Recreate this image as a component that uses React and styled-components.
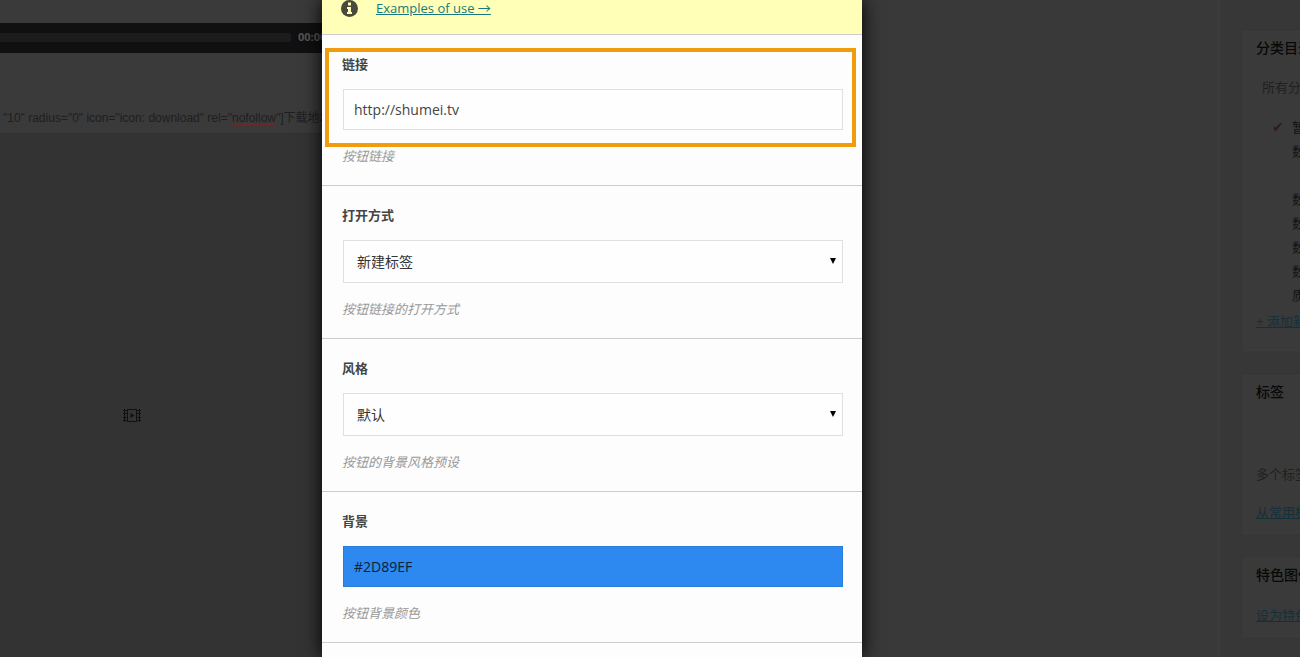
import React from 'react'
import styled, { createGlobalStyle } from 'styled-components'

const GlobalStyle = createGlobalStyle`
  * {
    box-sizing: border-box;
  }

  body {
    margin: 0;
    background: #373737;
    font-family: 'Open Sans', 'Noto Sans CJK SC', sans-serif;
    font-size: 13px;
    line-height: 18px;
    color: #333;
  }
`;

const Page = styled.div`
  position: relative;
  display: flex;
  height: 100vh;
  overflow: hidden;
`;

const Editor = styled.main`
  flex: 1;
  min-width: 0;
  display: flex;
  background: #393939;
  border-right: 3px solid #3b3b3b;
`;

const Preview = styled.div`
  width: 45%;
  background: #333;
`;

const Content = styled.div`
  background: #3a3a3a;
  border-bottom: 1px solid #303030;
  padding-top: 23px;
`;

const Player = styled.div`
  display: flex;
  align-items: center;
  gap: 7px;
  height: 30px;
  padding-bottom: 2px;
  background: #101010;
  color: #555;
  font: bold 11px/18px 'Open Sans', sans-serif;

  .track {
    width: 291px;
    height: 9px;
    border-radius: 0 2px 2px 0;
    background: #1c1c1c;
  }
`;

const Shortcode = styled.p`
  margin: 0;
  padding: 56px 0 6px 3px;
  color: #1e1e1e;
  font: 12px/18px 'Liberation Sans', 'Noto Sans CJK SC', sans-serif;
  white-space: nowrap;
  overflow: hidden;

  u {
    text-decoration-color: #6b2929;
    text-underline-offset: 2px;
  }
`;

const Film = styled.svg`
  display: block;
  margin: 275px 0 0 123px;
`;

const Sidebar = styled.aside`
  width: 80px;
  display: flex;
  flex-direction: column;
  gap: 24px;
  padding: 31px 0 0 23px;
  white-space: nowrap;
  overflow: hidden;
`;

const Box = styled.section`
  background: #3a3a3a;
  border: 1px solid #3c3c3c;
  border-right: 0;
  padding: 7px 0 12px 12px;
  color: #202020;

  h2 {
    margin: 0;
    font-size: 14px;
    line-height: 18px;
    font-weight: 500;
    color: #080808;
  }

  a {
    color: #14303a;
  }
`;

const BoxText = styled.p`
  margin: ${({ $top }) => $top || 0}px 0 ${({ $bottom }) => $bottom || 0}px;
`;

const Categories = styled.div`
  margin-top: 21px;
  padding-left: 6px;

  ul {
    list-style: none;
    height: 212px;
    margin: 0 0 4px;
    padding: 19px 0 0 10px;
    overflow: hidden;
    color: #121212;
  }

  li {
    height: 24px;
    line-height: 24px;
  }

  label {
    display: flex;
    align-items: center;
    gap: 6px;
  }

  input {
    appearance: none;
    flex: none;
    width: 14px;
    height: 14px;
    margin: 0;
  }

  input:checked::before {
    content: '✔';
    display: block;
    color: #301a1a;
    font: 14px/14px 'DejaVu Sans', sans-serif;
  }
`;

const Overlay = styled.div`
  position: absolute;
  inset: 0;
  display: flex;
  justify-content: center;
  padding-right: 116px;
`;

const Modal = styled.form`
  width: 540px;
  height: 100%;
  background: #fdfdfd;
  box-shadow: 0 0 18px #000;
  overflow: hidden;
`;

const Notice = styled.div`
  display: flex;
  align-items: center;
  gap: 18px;
  height: 35px;
  padding: 0 19px 18px;
  background: #ffffb8;
  border-bottom: 1px solid #ccc;

  a {
    color: #187a78;
  }
`;

const FieldRow = styled.div`
  position: relative;
  padding: 20px 19px 20px 20px;
  border-bottom: 1px solid #ccc;

  label {
    display: block;
    font-weight: bold;
    color: #444;
  }

  small {
    display: block;
    font-size: 13px;
    font-style: italic;
    color: #999;
  }
`;

const Highlight = styled.span`
  position: absolute;
  inset: 13px 6px 38px 3px;
  border: 4px solid #f09c0c;
  pointer-events: none;
`;

const Control = styled.div`
  display: grid;
  align-items: center;
  margin: 16px 0 17px 1px;

  > * {
    grid-area: 1 / 1;
  }

  svg {
    justify-self: end;
    margin-right: 6px;
    pointer-events: none;
  }
`;

const TextInput = styled.input`
  width: 100%;
  height: 41px;
  padding: 0 10px;
  border: 1px solid ${({ $color }) => ($color ? '#2a7cdb' : '#e0e0e0')};
  border-radius: 0;
  background: ${({ $color }) => $color || '#fefefe'};
  color: ${({ $color }) => ($color ? '#0c2036' : '#444')};
  font: 14px 'Open Sans', 'Noto Sans CJK SC', sans-serif;
`;

const Select = styled.select`
  appearance: none;
  width: 100%;
  height: 43px;
  padding: 0 24px 0 13px;
  border: 1px solid #e0e0e0;
  border-radius: 0;
  background: #fefefe;
  color: #333;
  font: 14px 'Open Sans', 'Noto Sans CJK SC', sans-serif;
`;

const fields = [
  { id: 'url', label: '链接', value: 'http://shumei.tv', hint: '按钮链接', highlight: true },
  { id: 'target', label: '打开方式', options: ['新建标签'], hint: '按钮链接的打开方式' },
  { id: 'style', label: '风格', options: ['默认'], hint: '按钮的背景风格预设' },
  { id: 'background', label: '背景', value: '#2D89EF', color: '#2d89ef', hint: '按钮背景颜色' },
];

const categories = ['暂', '数', '', '数', '数', '数', '数', '质'];

const Field = ({ id, label, value, options, color, hint, highlight }) => (
  <FieldRow>
    <label htmlFor={id}>{label}</label>
    <Control>
      {options ? (
        <>
          <Select id={id}>
            {options.map(option => <option key={option}>{option}</option>)}
          </Select>
          <svg width="8" height="8" viewBox="0 0 8 8">
            <path d="M1 0h6L4 6z" fill="#000" />
          </svg>
        </>
      ) : (
        <TextInput id={id} type="text" defaultValue={value} $color={color} />
      )}
    </Control>
    <small>{hint}</small>
    {highlight && <Highlight />}
  </FieldRow>
)

export default () => {
  return (
    <Page>
      <GlobalStyle />
      <Editor>
        <Preview>
          <Content>
            <Player>
              <div className='track' />
              <span>00:00</span>
            </Player>
            <Shortcode>"10" radius="0" icon="icon: download" rel="<u>nofollow</u>"]下载地址</Shortcode>
          </Content>
          <Film width="18" height="13" viewBox="0 0 18 13" fill="none" stroke="#111">
            <path d="M4.5 .5h9v12h-9zM1.5 0v13M16.5 0v13M0 1.5h4M0 4.5h4M0 8.5h4M0 11.5h4M14 1.5h4M14 4.5h4M14 8.5h4M14 11.5h4" />
            <path d="M7.5 4l4 2.5-4 2.5z" fill="#111" stroke="none" />
          </Film>
        </Preview>
      </Editor>
      <Sidebar>
        <Box>
          <h2>分类目录</h2>
          <Categories>
            <span>所有分类目录</span>
            <ul>
              {categories.map((name, i) => (
                <li key={i}>
                  {name && (
                    <label>
                      <input type="checkbox" defaultChecked={i === 0} />
                      {name}
                    </label>
                  )}
                </li>
              ))}
            </ul>
          </Categories>
          <BoxText $bottom={8}><a href="#add">+ 添加新分类目录</a></BoxText>
        </Box>
        <Box>
          <h2>标签</h2>
          <BoxText $top={64}>多个标签请用英文逗号（,）分开</BoxText>
          <BoxText $top={20}><a href="#tags">从常用标签中选择</a></BoxText>
        </Box>
        <Box>
          <h2>特色图像</h2>
          <BoxText $top={22}><a href="#image">设为特色图像</a></BoxText>
        </Box>
      </Sidebar>
      <Overlay>
        <Modal>
          <Notice>
            <svg width="17" height="17" viewBox="0 0 17 17">
              <circle cx="8.5" cy="8.5" r="8.5" fill="#4a4a3c" />
              <path d="M7 2.5h3v3H7zM6 7h4v5h1v2H6v-2h1V9H6z" fill="#ffffb8" />
            </svg>
            <a href="#examples">Examples of use →</a>
          </Notice>
          {fields.map(field => <Field key={field.id} {...field} />)}
        </Modal>
      </Overlay>
    </Page>
  )
}
